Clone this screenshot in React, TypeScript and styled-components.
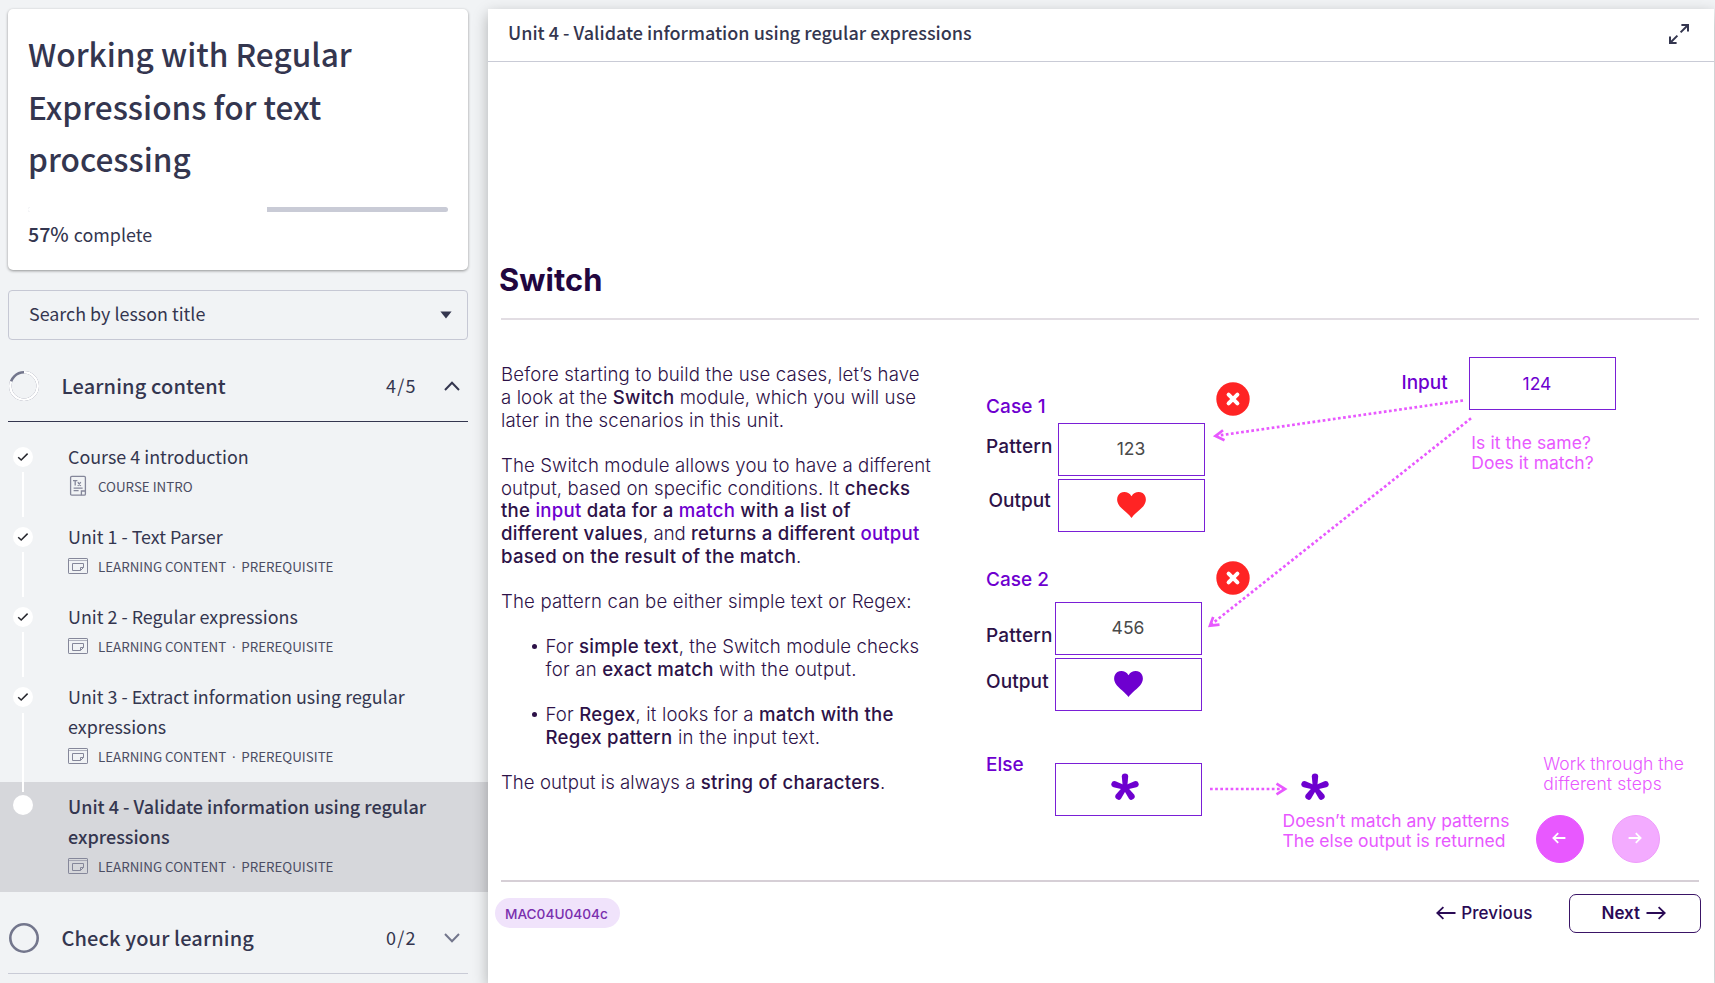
import React from "react";
import styled, { createGlobalStyle } from "styled-components";

const ui = `"Noto Sans CJK SC", "Noto Sans", sans-serif`;
const inter = `Inter, "Liberation Sans", sans-serif`;
const ink = "#34364f";
const plum = "#2d1248";
const violet = "#6e00cf";
const pink = "#e858ff";

const Global = createGlobalStyle`
  * { box-sizing: border-box; }
  html, body { margin: 0; height: 100%; overflow: hidden; background: #f1f3f5; }
  #root { height: 100%; }
  h1, h2, p, ul { margin: 0; padding: 0; font-weight: inherit; }
`;

const Page = styled.div`
  display: flex;
  width: 1715px;
  height: 983px;
  overflow: hidden;
  background: #f1f3f5;
  color: ${ink};
  font-family: ${ui};
`;

const T = styled.span<{ $ls?: number }>`
  white-space: nowrap;
  letter-spacing: ${(p) => (p.$ls === undefined ? "inherit" : `${p.$ls}px`)};
`;

/* ---------- sidebar ---------- */
const Sidebar = styled.aside`
  display: flex;
  flex-direction: column;
  width: 488px;
  flex: none;
  padding-top: 9px;
`;

const Card = styled.section`
  height: 261px;
  margin: 0 20px 20px 8px;
  padding: 18px 20px 0;
  border-radius: 5px;
  background: #fff;
  box-shadow: 0 1px 3px rgba(0, 0, 0, 0.4);
`;

const Title = styled.h1`
  display: flex;
  flex-direction: column;
  font-size: 31.6px;
  font-weight: 500;
  line-height: 52.6px;
`;

const Track = styled.div`
  height: 5px;
  margin-top: 22px;
  border-radius: 3px;
  background: #c9cbd6;
  overflow: hidden;
`;

const Fill = styled.div`
  height: 100%;
  background: #fff;
`;

const Complete = styled.p`
  display: flex;
  align-items: baseline;
  gap: 5px;
  margin-top: 5px;
  font-size: 17.9px;
  line-height: 34px;
  b {
    font-size: 19.6px;
    font-weight: 500;
  }
`;

const Search = styled.div`
  display: flex;
  align-items: center;
  justify-content: space-between;
  height: 50px;
  margin: 0 20px 0 8px;
  padding: 0 15px 0 20px;
  border: 1px solid #c6c8d4;
  border-radius: 4px;
  font-size: 17.9px;
  line-height: 30px;
  span { padding-bottom: 3px; margin-top: -2px; }
`;

const SectionHead = styled.div<{ $open?: boolean }>`
  display: flex;
  align-items: center;
  height: 82px;
  margin: 0 20px 0 8px;
  padding: 10px 8px 0 0;
  border-bottom: 1px solid ${(p) => (p.$open ? ink : "#c9cbd6")};
`;

const SectionName = styled.h2`
  flex: 1;
  padding-left: 21.5px;
  font-size: 20px;
  font-weight: 500;
  line-height: 32px;
  letter-spacing: 0.13px;
`;

const Count = styled.span`
  width: 58px;
  padding-bottom: 1px;
  font-size: 18px;
  line-height: 30px;
`;

const Lessons = styled.ul`
  list-style: none;
  padding-top: 20px;
`;

const Lesson = styled.li<{ $active?: boolean }>`
  display: grid;
  grid-template-columns: 30px 1fr;
  column-gap: 30px;
  padding: ${(p) => (p.$active ? "9px 20px 11px 8px" : "0 20px 0 8px")};
  height: ${(p) => (p.$active ? "110px" : "auto")};
  background: ${(p) => (p.$active ? "#d6d7db" : "transparent")};
`;

const Marker = styled.div<{ $active?: boolean }>`
  display: flex;
  flex-direction: column;
  align-items: center;
  padding-top: ${(p) => (p.$active ? 4 : 5)}px;
`;

const Dot = styled.div`
  display: grid;
  place-items: center;
  width: 20px;
  height: 20px;
  border-radius: 50%;
  background: #fff;
`;

const Link = styled.div<{ $over?: boolean }>`
  flex: 1;
  width: 2px;
  margin: ${(p) => (p.$over ? "6px 0 -10px" : "5px 0")};
  background: #fff;
`;

const LessonBody = styled.div<{ $last?: boolean; $active?: boolean }>`
  margin-top: ${(p) => (p.$active ? 0 : -1)}px;
  padding-bottom: ${(p) => (p.$active ? 0 : p.$last ? 11 : 21)}px;
`;

const LessonName = styled.div<{ $active?: boolean }>`
  display: flex;
  flex-direction: column;
  font-size: ${(p) => (p.$active ? 18 : 17.9)}px;
  line-height: 30px;
  font-weight: ${(p) => (p.$active ? 500 : 400)};
`;

const Meta = styled.div`
  display: flex;
  align-items: center;
  gap: 10px;
  height: 30px;
  color: #4b4d63;
  font-size: 13.35px;
`;

const Kind = styled.span`
  display: flex;
  white-space: nowrap;
`;

const Sep = styled.span`
  width: 15px;
  padding-top: 1px;
  text-align: center;
  font-family: "Noto Sans", sans-serif;
`;

/* ---------- player ---------- */
const Player = styled.main`
  position: relative;
  display: flex;
  flex-direction: column;
  width: 1226px;
  margin-top: 9px;
  background: #fff;
  box-shadow: 0 5px 14px rgba(0, 0, 0, 0.28);
`;

const PlayerHead = styled.header`
  display: flex;
  align-items: center;
  justify-content: space-between;
  height: 53px;
  padding: 0 25px 3px 20px;
  border-bottom: 1px solid #c9cbd6;
  font-size: 18px;
  font-weight: 500;
  line-height: 30px;
  span { padding-bottom: 2px; margin-top: -2px; }
`;

const Slide = styled.article`
  display: flex;
  flex-direction: column;
  padding: 196px 15px 0 13px;
  font-family: ${inter};
  color: ${plum};
`;

const SlideTitle = styled.h2`
  margin-left: -2px;
  height: 60px;
  color: #22063f;
  font-size: 30.8px;
  font-weight: 700;
  line-height: 44px;
  letter-spacing: 0.1px;
`;

const Rule = styled.hr<{ $soft?: boolean }>`
  width: 100%;
  height: 2px;
  margin: 0;
  border: 0;
  background: ${(p) => (p.$soft ? "#e2dde3" : "#d6cfd6")};
`;

const SlideBody = styled.div`
  display: grid;
  grid-template-columns: 459px 1fr;
  height: 560px;
`;

const Copy = styled.div`
  display: flex;
  flex-direction: column;
  gap: 22.67px;
  padding-top: 43.4px;
  font-size: 18.6px;
  font-weight: 300;
  line-height: 22.67px;
  letter-spacing: 0.15px;
  b {
    font-weight: 500;
    letter-spacing: 0.24px;
  }
  em {
    color: ${violet};
    font-style: normal;
  }
`;

const Para = styled.p`
  display: flex;
  flex-direction: column;
`;

const Bullet = styled.div`
  display: flex;
  gap: 8.5px;
  padding-left: 31px;
  &::before {
    content: "";
    width: 5px;
    height: 5px;
    margin-top: 9px;
    border-radius: 50%;
    background: ${plum};
  }
`;

const Canvas = styled.div`
  position: relative;
`;

const Arrows = styled.svg`
  position: absolute;
  left: 0;
  top: 0;
`;

const Node = styled.div<{ $x: number; $y: number; $shift?: number; $lift?: number; $color?: string }>`
  position: absolute;
  left: ${(p) => p.$x}px;
  top: ${(p) => p.$y}px;
  display: grid;
  place-items: center;
  width: 147px;
  height: 52.5px;
  padding-right: ${(p) => p.$shift ?? 1}px;
  padding-bottom: ${(p) => p.$lift ?? 1}px;
  border: 1.5px solid #7a1fd6;
  color: ${(p) => p.$color ?? "#4a4a4a"};
  font-size: 17.5px;
`;

const Label = styled.div<{ $x: number; $y: number; $color?: string; $note?: boolean; $weight?: number }>`
  position: absolute;
  left: ${(p) => p.$x}px;
  top: ${(p) => p.$y - (p.$note ? 16.4 : 16)}px;
  display: flex;
  flex-direction: column;
  color: ${(p) => p.$color ?? plum};
  font-size: ${(p) => (p.$note ? 17.5 : 19)}px;
  font-weight: ${(p) => p.$weight ?? (p.$note ? 400 : 500)};
  line-height: 20px;
  letter-spacing: ${(p) => (p.$note ? 0 : 0.1)}px;
`;

const Pin = styled.div<{ $x: number; $y: number }>`
  position: absolute;
  left: ${(p) => p.$x}px;
  top: ${(p) => p.$y}px;
  display: flex;
`;

const Step = styled.button<{ $x: number; $faded?: boolean }>`
  position: absolute;
  left: ${(p) => p.$x}px;
  top: 495px;
  display: grid;
  place-items: center;
  width: 48px;
  height: 48px;
  padding: 0 3px 3px 0;
  border: 1px solid ${(p) => (p.$faded ? "#ef9cfb" : "#e858ff")};
  border-radius: 50%;
  background: ${(p) => (p.$faded ? "#f3abff" : pink)};
`;

const Footer = styled.footer`
  display: flex;
  align-items: center;
  height: 62px;
  margin: 0 -2px 0 -6px;
`;

const Code = styled.span`
  width: 124.5px;
  height: 30px;
  margin-right: auto;
  padding: 1px 0 0 10px;
  border-radius: 15px;
  background: #f0e3fb;
  color: #7a2fae;
  font-size: 13.65px;
  font-weight: 500;
  line-height: 30px;
`;

const Nav = styled.button<{ $boxed?: boolean }>`
  display: flex;
  align-items: center;
  justify-content: center;
  gap: 5.5px;
  height: 39px;
  width: ${(p) => (p.$boxed ? "132px" : "auto")};
  margin-left: ${(p) => (p.$boxed ? "36.5px" : "0")};
  padding: ${(p) => (p.$boxed ? "0 3px 0 0" : "0")};
  border: ${(p) => (p.$boxed ? "1.5px solid #3a1466" : "0")};
  border-radius: 7px;
  background: #fff;
  color: #2a0a55;
  font-family: ${inter};
  font-size: 17px;
  font-weight: ${(p) => (p.$boxed ? 600 : 500)};
`;

/* ---------- drawings ---------- */
const Check = () => (
  <svg width="12" height="10" viewBox="0 0 12 10" fill="none" stroke="#26272e" strokeWidth="1.5">
    <path d="M1.2 5.2 L4.2 8 L10.6 1.6" />
  </svg>
);

const Chevron = ({ up }: { up?: boolean }) => (
  <svg width="16" height="10" viewBox="0 0 16 10" fill="none" stroke={up ? ink : "#73768c"} strokeWidth="2">
    <path d={up ? "M1 9 L8 1.8 L15 9" : "M1 1 L8 8.2 L15 1"} />
  </svg>
);

const Ring = ({ share }: { share: number }) => {
  const len = 2 * Math.PI * 13.7;
  return (
    <svg width="32" height="32" viewBox="0 0 32 32" fill="none">
      <circle cx="16" cy="16" r="13.7" stroke="#73768c" strokeWidth="2.6" />
      {share > 0 && (
        <circle
          cx="16"
          cy="16"
          r="13.7"
          stroke="#fff"
          strokeWidth="2.6"
          strokeDasharray={`${len * share} ${len}`}
          transform="rotate(-90 16 16)"
        />
      )}
    </svg>
  );
};

const DocIcon = () => (
  <svg width="20" height="22" viewBox="0 0 20 22" fill="none" stroke="#85879a" strokeWidth="1.3">
    <path d="M2.6 2.6 Q2.6 1.4 3.8 1.4 H16.2 Q17.4 1.4 17.4 2.6 V19 Q17.4 20.2 16.2 20.2 H3.8 Q2.6 20.2 2.6 19 Z" />
    <path d="M17.4 16 H13.4 V20.2 M5.6 13.2 H14.6 M5.6 15.6 H10.6" />
    <path d="M5 5.6 H9.4 M7.2 5.6 V10.4 M9.8 7.2 L12.8 10.8 M12.8 7.2 L9.8 10.8" />
  </svg>
);

const FrameIcon = () => (
  <svg width="20" height="17" viewBox="0 0 20 17" fill="none" stroke="#85879a" strokeWidth="1">
    <rect x="0.5" y="0.5" width="19" height="15" rx="0.6" />
    <path d="M1 2.5 H19" strokeOpacity="0.6" />
    <path d="M4.5 5.5 H15.5 V9.5 L12.5 12.5 H4.5 Z M15.5 9.5 H12.5 V12.5" />
  </svg>
);

const Expand = () => (
  <svg width="20" height="20" viewBox="0 0 20 20" fill="none" stroke={ink} strokeWidth="2">
    <path d="M12.4 1 H19 V7.6 M19 1 L11.6 8.4 M1 12.4 V19 H7.6 M1 19 L8.4 11.6" />
  </svg>
);

const Heart = ({ color }: { color: string }) => (
  <svg width="29" height="26" viewBox="0 0 29 26" fill={color}>
    <path d="M14.5 26 C12 22 4.5 17 2 13.2 C-1.2 8.6 0 3.2 3.4 1.1 C7.2 -1 12 0.2 14.5 4.2 C17 0.2 21.8 -1 25.6 1.1 C29 3.2 30.2 8.6 27 13.2 C24.5 17 17 22 14.5 26 Z" />
  </svg>
);

const Star = () => (
  <svg width="28" height="28" viewBox="-14 -14.6 28 28" fill={violet}>
    {[0, 72, 144, 216, 288].map((a) => (
      <path key={a} transform={`rotate(${a})`} d="M-2.1 1 L-3.2 -11 A3.2 3.2 0 0 1 3.2 -11 L2.1 1 Z" />
    ))}
  </svg>
);

const Cross = () => (
  <svg width="34" height="34" viewBox="0 0 34 34">
    <circle cx="17" cy="17" r="16.7" fill="#ff2424" />
    <path d="M12.6 12.6 L21.4 21.4 M21.4 12.6 L12.6 21.4" stroke="#fff" strokeWidth="4" strokeLinecap="round" />
  </svg>
);

const SmallArrow = ({ left }: { left?: boolean }) => (
  <svg width="14" height="12" viewBox="0 0 14 12" fill="none" stroke="#fff" strokeWidth="1.8" transform={left ? "scale(-1 1)" : undefined}>
    <path d="M0.6 6 H12.4 M7.8 1.2 L12.6 6 L7.8 10.8" />
  </svg>
);

const LongArrow = ({ left }: { left?: boolean }) => (
  <svg width="20" height="14" viewBox="0 0 20 14" fill="none" stroke="#2a0a55" strokeWidth="1.8" transform={left ? "scale(-1 1)" : undefined}>
    <path d="M0.5 7 H18.6 M12.6 1.2 L18.8 7 L12.6 12.8" />
  </svg>
);

type Item = { lines: string[]; intro?: boolean; active?: boolean; last?: boolean };

const items: Item[] = [
  { lines: ["Course 4 introduction"], intro: true },
  { lines: ["Unit 1 - Text Parser"] },
  { lines: ["Unit 2 - Regular expressions"] },
  { lines: ["Unit 3 - Extract information using regular", "expressions"], last: true },
  { lines: ["Unit 4 - Validate information using regular", "expressions"], active: true },
];

function LessonRow({ item }: { item: Item }) {
  return (
    <Lesson $active={item.active}>
      <Marker $active={item.active}>
        <Dot>{!item.active && <Check />}</Dot>
        {!item.active && <Link $over={item.last} />}
      </Marker>
      <LessonBody $last={item.last} $active={item.active}>
        <LessonName $active={item.active}>
          {item.lines.map((l) => (
            <T key={l}>{l}</T>
          ))}
        </LessonName>
        <Meta>
          {item.intro ? <DocIcon /> : <FrameIcon />}
          {item.intro ? (
            <Kind>COURSE INTRO</Kind>
          ) : (
            <Kind>
              LEARNING CONTENT<Sep>·</Sep>PREREQUISITE
            </Kind>
          )}
        </Meta>
      </LessonBody>
    </Lesson>
  );
}

export default function App() {
  return (
    <Page>
      <Global />
      <Sidebar>
        <Card>
          <Title>
            <T>Working with Regular</T>
            <T>Expressions for text</T>
            <T>processing</T>
          </Title>
          <Track>
            <Fill style={{ width: "57%" }} />
          </Track>
          <Complete>
            <b>57%</b>
            <T>complete</T>
          </Complete>
        </Card>
        <Search>
          <T>Search by lesson title</T>
          <svg width="12" height="8" viewBox="0 0 12 8" fill={ink}>
            <path d="M0.4 0.5 H11.6 L6 7.4 Z" />
          </svg>
        </Search>
        <SectionHead $open>
          <Ring share={0.8} />
          <SectionName>Learning content</SectionName>
          <Count>
            <T $ls={1.2}>4/5</T>
          </Count>
          <Chevron up />
        </SectionHead>
        <Lessons>
          {items.map((item) => (
            <LessonRow key={item.lines[0]} item={item} />
          ))}
        </Lessons>
        <SectionHead>
          <Ring share={0} />
          <SectionName>Check your learning</SectionName>
          <Count>
            <T $ls={1.2}>0/2</T>
          </Count>
          <Chevron />
        </SectionHead>
      </Sidebar>
      <Player>
        <PlayerHead>
          <T>Unit 4 - Validate information using regular expressions</T>
          <Expand />
        </PlayerHead>
        <Slide>
          <SlideTitle>Switch</SlideTitle>
          <Rule $soft />
          <SlideBody>
            <Copy>
              <Para>
                <T>Before starting to build the use cases, let’s have</T>
                <T $ls={0.1}>a look at the <b>Switch</b> module, which you will use</T>
                <T>later in the scenarios in this unit.</T>
              </Para>
              <Para>
                <T $ls={0.12}>The Switch module allows you to have a different</T>
                <T $ls={0.1}>output, based on specific conditions. It <b>checks</b></T>
                <T><b>the <em>input</em> data for a <em>match</em> with a list of</b></T>
                <T $ls={0}><b>different values</b>, and <b>returns a different <em>output</em></b></T>
                <T><b>based on the result of the match</b>.</T>
              </Para>
              <Para>
                <T>The pattern can be either simple text or Regex:</T>
              </Para>
              <Bullet>
                <Para>
                  <T $ls={0.1}>For <b>simple text</b>, the Switch module checks</T>
                  <T $ls={0.22}>for an <b>exact match</b> with the output.</T>
                </Para>
              </Bullet>
              <Bullet>
                <Para>
                  <T>For <b>Regex</b>, it looks for a <b>match with the</b></T>
                  <T $ls={0.25}><b>Regex pattern</b> in the input text.</T>
                </Para>
              </Bullet>
              <Para>
                <T $ls={0.05}>The output is always a <b>string of characters</b>.</T>
              </Para>
            </Copy>
            <Canvas>
              <Arrows width="740" height="560" viewBox="0 0 740 560" fill="none" stroke={pink} strokeWidth="2.7">
                <path d="M503 80.5 L258 115.6" strokeDasharray="2.7 2.45" />
                <path d="M263 110.3 L255.5 116 L264.5 120.2" />
                <path d="M511 98.3 L251 304.6" strokeDasharray="2.7 2.45" />
                <path d="M253.2 297 L250 305.6 L259.5 304.6" />
                <path d="M250 469 H324" strokeDasharray="2.7 2.45" />
                <path d="M316.5 463.7 L325 469 L316.5 474.3" />
              </Arrows>

              <Label $x={26} $y={92.5} $color={violet}><T>Case 1</T></Label>
              <Label $x={26} $y={133}><T $ls={0.2}>Pattern</T></Label>
              <Label $x={28.5} $y={186.5}><T $ls={0}>Output</T></Label>
              <Node $x={98} $y={103}>123</Node>
              <Node $x={98} $y={159}><Heart color="#ff2424" /></Node>
              <Pin $x={255.5} $y={61.7}><Cross /></Pin>

              <Label $x={26} $y={266} $color={violet}><T $ls={0}>Case 2</T></Label>
              <Label $x={26} $y={322}><T $ls={0.2}>Pattern</T></Label>
              <Label $x={26} $y={368}><T>Output</T></Label>
              <Node $x={95} $y={282}>456</Node>
              <Node $x={95} $y={338}><Heart color={violet} /></Node>
              <Pin $x={255.5} $y={240.7}><Cross /></Pin>

              <Label $x={26} $y={450.5} $color={violet}><T $ls={0}>Else</T></Label>
              <Node $x={95} $y={443} $shift={7} $lift={4}><Star /></Node>
              <Pin $x={340.5} $y={453}><Star /></Pin>
              <Label $x={322.5} $y={507} $color={pink} $note>
                <T>Doesn’t match any patterns</T>
                <T>The else output is returned</T>
              </Label>

              <Label $x={441.5} $y={69} $color={violet}><T $ls={0}>Input</T></Label>
              <Node $x={509} $y={37} $shift={11} $lift={0} $color={violet}>124</Node>
              <Label $x={511.3} $y={129} $color={pink} $note>
                <T $ls={0.08}>Is it the same?</T>
                <T>Does it match?</T>
              </Label>

              <Label $x={583.3} $y={450} $color={pink} $note $weight={300}>
                <T>Work through the</T>
                <T $ls={0.15}>different steps</T>
              </Label>
              <Step $x={576}><SmallArrow left /></Step>
              <Step $x={652} $faded><SmallArrow /></Step>
            </Canvas>
          </SlideBody>
          <Rule />
          <Footer>
            <Code>MAC04U0404c</Code>
            <Nav><LongArrow left /><T $ls={0.1}>Previous</T></Nav>
            <Nav $boxed><T>Next</T><LongArrow /></Nav>
          </Footer>
        </Slide>
      </Player>
    </Page>
  );
}
